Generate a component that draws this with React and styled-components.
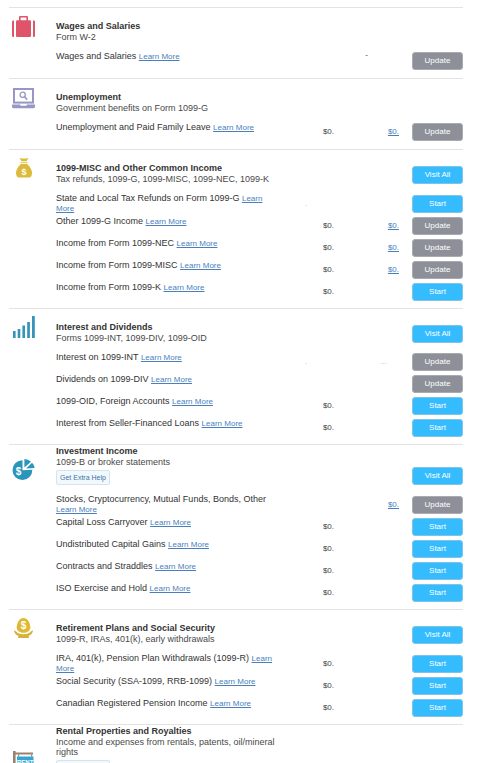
import React from "react";
import styled, { createGlobalStyle, css } from "styled-components";

const GlobalStyle = createGlobalStyle`
  html {
    scrollbar-width: none;
  }

  body {
    margin: 0;
    background: #fff;
    color: #3c3c3c;
    font-family: "Liberation Sans", Arial, sans-serif;
    font-size: 9px;
  }
`;

const Page = styled.main`
  padding: 7px 31px 0 9px;
`;

const Section = styled.section`
  display: grid;
  grid-template-columns: 47px minmax(0, 1fr);
  border-top: 1px solid #e3e3e3;
  padding-bottom: ${({ $roomy }) => ($roomy ? "6px" : "5px")};
`;

const IconCell = styled.div`
  padding: ${({ $top }) => $top}px 0 0 3px;

  svg {
    display: block;
  }
`;

const Header = styled.header`
  display: flex;
  justify-content: space-between;
  align-items: flex-end;
  padding: ${({ $compact }) => ($compact ? "1px" : "13px")} 0 8px;
`;

const Heading = styled.div`
  max-width: 222px;
`;

const Title = styled.h2`
  margin: 0;
  font-size: 9px;
  line-height: 11px;
  font-weight: bold;
  color: #333;
`;

const Subtitle = styled.p`
  margin: 0;
  line-height: 10px;
  color: #484848;
`;

const HelpButton = styled.button`
  display: block;
  box-sizing: border-box;
  height: 15px;
  margin-top: 3px;
  padding: 0 3px;
  border: 1px solid #d3e6f0;
  border-radius: 2px;
  background: #f1f9fd;
  color: #3f73a8;
  font-family: inherit;
  font-size: 7px;
  line-height: 13px;
`;

const Row = styled.div`
  display: grid;
  grid-template-columns: minmax(0, 1fr) 56px 65px 64px;
  align-items: center;
  min-height: 22px;
`;

const Label = styled.div`
  align-self: start;
  padding: 1px 0 2px;
  line-height: 10px;
  color: #333;
`;

const linkStyle = css`
  color: #4a7fbe;
  text-decoration: underline;
`;

const LearnMore = styled.a`
  ${linkStyle}
  font-size: 8px;
  line-height: 8px;
`;

const Amount = styled.div`
  text-align: right;
  font-size: 8px;
  line-height: 10px;
  color: #444;

  a {
    ${linkStyle}
  }
`;

const Mark = styled.div`
  text-align: center;
  font-size: 8px;
  line-height: 10px;
  color: ${({ $faint }) => ($faint ? "#bbb" : "#444")};
`;

const DashMark = styled(Mark)`
  align-self: start;
`;

const DotsMark = styled(Mark)`
  padding-right: 12px;
  text-align: right;
`;

const ActionButton = styled.button`
  justify-self: end;
  flex: none;
  box-sizing: border-box;
  width: 51px;
  height: 18px;
  padding: 0;
  border: 1px solid ${({ $gray }) => ($gray ? "#a9abb1" : "#7fc3e6")};
  border-radius: 3px;
  background: ${({ $gray }) => ($gray ? "#8d9098" : "#34bcff")};
  color: #fff;
  font-family: inherit;
  font-size: 8px;
  line-height: 16px;
  cursor: pointer;
`;

const Dollar = styled.text`
  font-family: "Liberation Sans", Arial, sans-serif;
  font-weight: bold;
  text-anchor: middle;
  fill: #fff;
`;

const SuitcaseIcon = () => (
  <svg width="23" height="21" viewBox="0 0 23 21" fill="#df5468">
    <path d="M2 4.5V21H1.2A1.2 1.2 0 0 1 0 19.8V5.7A1.2 1.2 0 0 1 1.2 4.5z" />
    <path d="M21 4.5V21h.8a1.2 1.2 0 0 0 1.2-1.2V5.7a1.2 1.2 0 0 0-1.2-1.2z" />
    <path d="M4 5.4Q4 4.3 5.1 4.3H7V1Q7 0 8 0h7q1 0 1 1v3.3h1.9Q19 4.3 19 5.4V19.9Q19 21 17.9 21H5.1Q4 21 4 19.9zM8.6 4.3h5.8V1.6H8.6z" />
  </svg>
);

const LaptopIcon = () => (
  <svg width="23" height="21" viewBox="0 0 23 21">
    <rect x="2" y="1" width="19" height="13.6" fill="none" stroke="#9896c4" strokeWidth="2" />
    <circle cx="10.7" cy="6.8" r="2.6" fill="none" stroke="#9896c4" strokeWidth="1.3" />
    <path d="M12.6 8.8l2.6 2.8" stroke="#9896c4" strokeWidth="1.6" />
    <path d="M0 16.6h8.3v1.2h6.4v-1.2H23v2.2q0 1.4-1.4 1.4H1.4Q0 20.2 0 18.8z" fill="#9896c4" />
  </svg>
);

const MoneyBagIcon = () => (
  <svg width="23" height="21" viewBox="0 0 23 21">
    <path d="M7.5 0l2 .5h5l2-.5-2 3.2h-5z" fill="#dcba3c" />
    <rect x="8.5" y="4" width="7" height="1.2" fill="#e6cd70" />
    <path d="M9 6h6c2.500 2 5 5.600 5 9 0 2.700-1 4.500-3 4.500H7c-2 0-3-1.800-3-4.500 0-3.400 2.500-7 5-9z" fill="#dcba3c" />
    <Dollar x="12" y="16.5" fontSize="9">$</Dollar>
  </svg>
);

const BarsIcon = () => (
  <svg width="23" height="22" viewBox="0 0 23 22" fill="#3594b8">
    <rect x="1" y="15" width="2.6" height="7" />
    <rect x="5.7" y="13" width="2.6" height="9" />
    <rect x="10.4" y="9.5" width="2.6" height="12.5" />
    <rect x="15.2" y="6" width="2.7" height="16" />
    <rect x="20" y="0" width="2.8" height="22" />
  </svg>
);

const PieIcon = () => (
  <svg width="23" height="22" viewBox="0 0 23 22">
    <path d="M10.5 1.200v10l9.800-.4a9.900 9.900 0 1 1-9.800-9.600z" fill="#2b95bb" />
    <path d="M12.4 0q3.700 0 6.600 2.800l-6.600 5.800z" fill="#2b95bb" />
    <path d="M20 3.800q2.500 2.400 2.700 5.200l-8.600.6z" fill="#2b95bb" />
    <Dollar x="6.500" y="15.500" fontSize="10">$</Dollar>
  </svg>
);

const NestEggIcon = () => (
  <svg width="23" height="21" viewBox="0 0 23 21">
    <path d="M11.5 0c4 0 6.800 5 6.800 9.300 0 3.200-2.500 5.500-6.800 5.500s-6.800-2.300-6.800-5.500C4.700 5 7.500 0 11.500 0z" fill="#dfb932" />
    <path d="M2 12.500q1.200-.3 1.800.7 2.400 3 7.700 3t7.700-3q.6-1 1.800-.7-.4 3.600-4.400 5.600l.5 2H5.900l.5-2Q2.400 16.100 2 12.500z" fill="#d5b239" />
    <Dollar x="11.5" y="11.2" fontSize="10">$</Dollar>
  </svg>
);

const RentIcon = () => (
  <svg width="23" height="24" viewBox="0 0 23 24">
    <path d="M1 0h2.600v1.600H21v2H3.600V24H1z" fill="#9c8170" />
    <path d="M6 3.600h1.200v2H6zM19 3.600h1.200v2H19z" fill="#9c8170" />
    <rect x="5" y="5.5" width="16.5" height="12" fill="#35a4d2" />
    <Dollar x="13.2" y="12.5" fontSize="6">RENT</Dollar>
  </svg>
);

const sections = [
  {
    title: "Wages and Salaries",
    subtitle: "Form W-2",
    icon: <SuitcaseIcon />,
    iconTop: 8,
    rows: [{ label: "Wages and Salaries", dash: true, action: "Update" }],
  },
  {
    title: "Unemployment",
    subtitle: "Government benefits on Form 1099-G",
    icon: <LaptopIcon />,
    iconTop: 9,
    rows: [
      { label: "Unemployment and Paid Family Leave", prior: "$0.", current: "$0.", action: "Update" },
    ],
  },
  {
    title: "1099-MISC and Other Common Income",
    subtitle: "Tax refunds, 1099-G, 1099-MISC, 1099-NEC, 1099-K",
    icon: <MoneyBagIcon />,
    iconTop: 8,
    visitAll: true,
    rows: [
      { label: "State and Local Tax Refunds on Form 1099-G", dot: true, action: "Start" },
      { label: "Other 1099-G Income", prior: "$0.", current: "$0.", action: "Update" },
      { label: "Income from Form 1099-NEC", prior: "$0.", current: "$0.", action: "Update" },
      { label: "Income from Form 1099-MISC", prior: "$0.", current: "$0.", action: "Update" },
      { label: "Income from Form 1099-K", prior: "$0.", action: "Start" },
    ],
  },
  {
    title: "Interest and Dividends",
    subtitle: "Forms 1099-INT, 1099-DIV, 1099-OID",
    icon: <BarsIcon />,
    iconTop: 7,
    visitAll: true,
    rows: [
      { label: "Interest on 1099-INT", dot: true, dots: true, action: "Update" },
      { label: "Dividends on 1099-DIV", action: "Update" },
      { label: "1099-OID, Foreign Accounts", prior: "$0.", action: "Start" },
      { label: "Interest from Seller-Financed Loans", prior: "$0.", action: "Start" },
    ],
  },
  {
    title: "Investment Income",
    subtitle: "1099-B or broker statements",
    icon: <PieIcon />,
    iconTop: 14,
    help: true,
    visitAll: true,
    rows: [
      { label: "Stocks, Cryptocurrency, Mutual Funds, Bonds, Other", current: "$0.", action: "Update" },
      { label: "Capital Loss Carryover", prior: "$0.", action: "Start" },
      { label: "Undistributed Capital Gains", prior: "$0.", action: "Start" },
      { label: "Contracts and Straddles", prior: "$0.", action: "Start" },
      { label: "ISO Exercise and Hold", prior: "$0.", action: "Start" },
    ],
  },
  {
    title: "Retirement Plans and Social Security",
    subtitle: "1099-R, IRAs, 401(k), early withdrawals",
    icon: <NestEggIcon />,
    iconTop: 8,
    visitAll: true,
    rows: [
      { label: "IRA, 401(k), Pension Plan Withdrawals (1099-R)", prior: "$0.", action: "Start" },
      { label: "Social Security (SSA-1099, RRB-1099)", prior: "$0.", action: "Start" },
      { label: "Canadian Registered Pension Income", prior: "$0.", action: "Start" },
    ],
  },
  {
    title: "Rental Properties and Royalties",
    subtitle: "Income and expenses from rentals, patents, oil/mineral rights",
    icon: <RentIcon />,
    iconTop: 26,
    help: true,
    rows: [],
  },
];

const CurrentCell = ({ row }) => {
  if (row.dash) return <DashMark>-</DashMark>;
  if (row.dots) return <DotsMark $faint>...</DotsMark>;
  return <Amount>{row.current && <a href="#">{row.current}</a>}</Amount>;
};

const IncomeRow = ({ row }) => (
  <Row>
    <Label>
      {row.label} <LearnMore href="#">Learn More</LearnMore>
    </Label>
    {row.dot ? <Mark $faint>.</Mark> : <Amount>{row.prior}</Amount>}
    <CurrentCell row={row} />
    <ActionButton type="button" $gray={row.action === "Update"}>
      {row.action}
    </ActionButton>
  </Row>
);

const App = () => {
  return (
    <>
      <GlobalStyle />
      <Page>
        {sections.map((section) => (
          <Section key={section.title} $roomy={!section.visitAll}>
            <IconCell $top={section.iconTop}>{section.icon}</IconCell>
            <div>
              <Header $compact={section.help}>
                <Heading>
                  <Title>{section.title}</Title>
                  <Subtitle>{section.subtitle}</Subtitle>
                  {section.help && <HelpButton type="button">Get Extra Help</HelpButton>}
                </Heading>
                {section.visitAll && <ActionButton type="button">Visit All</ActionButton>}
              </Header>
              {section.rows.map((row) => (
                <IncomeRow key={row.label} row={row} />
              ))}
            </div>
          </Section>
        ))}
      </Page>
    </>
  );
};

export default App;
